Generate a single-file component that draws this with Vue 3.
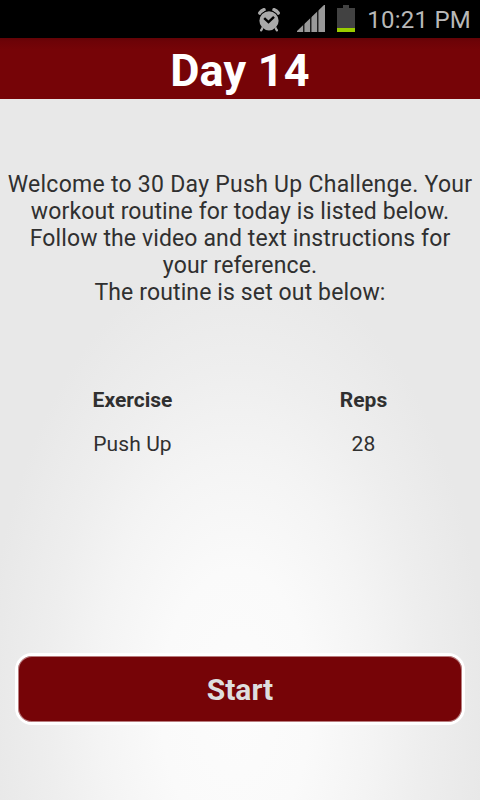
<script setup>
const day = 14

const intro = [
  'Welcome to 30 Day Push Up Challenge. Your',
  'workout routine for today is listed below.',
  'Follow the video and text instructions for',
  'your reference.',
  'The routine is set out below:'
]

const routine = [
  { exercise: 'Push Up', reps: 28 }
]
</script>

<template>
  <div class="screen">
    <div class="status-bar">
      <svg class="alarm" width="24" height="26" viewBox="0 0 24 26">
        <g fill="none" stroke="#a9a9a9" stroke-linecap="round">
          <path d="M2.8 6 Q4.5 3.6 7 2.8" stroke-width="3.6" />
          <path d="M21.2 6 Q19.5 3.6 17 2.8" stroke-width="3.6" />
          <path d="M5.5 21 L4 23.5 M18.5 21 L20 23.5" stroke-width="2" />
        </g>
        <circle cx="12" cy="13.8" r="10.5" fill="#000" />
        <path d="M5.5 20.5 L4 23.8 M18.5 20.5 L20 23.8" fill="none" stroke="#a9a9a9" stroke-width="2" />
        <circle cx="12" cy="13.8" r="9.6" fill="#a9a9a9" />
        <path d="M7.2 11.2 L11.5 15.2 L17 9.8" fill="none" stroke="#000" stroke-width="2.4" />
      </svg>
      <svg class="signal" width="28" height="27" viewBox="0 0 28 27">
        <path d="M0 26 L27 0 H28 V27 H0 Z" fill="#999" />
        <path d="M6.8 17 V27 M13.8 10 V27 M20.8 4 V27" stroke="#000" stroke-width="1.2" />
      </svg>
      <svg class="battery" width="18" height="27" viewBox="0 0 18 27">
        <path d="M0 3 H6 V0 H12 V3 H18 V27 H0 Z" fill="#424242" />
        <rect y="23" width="18" height="4" fill="#99cc00" />
      </svg>
      <span class="clock">10:21 PM</span>
    </div>

    <header class="title-bar">
      <h1>Day {{ day }}</h1>
    </header>

    <main class="content">
      <p class="intro">
        <span v-for="line in intro" :key="line">{{ line }}</span>
      </p>

      <div class="routine">
        <div class="row head">
          <span>Exercise</span>
          <span>Reps</span>
        </div>
        <div v-for="item in routine" :key="item.exercise" class="row">
          <span>{{ item.exercise }}</span>
          <span>{{ item.reps }}</span>
        </div>
      </div>

      <button class="start">Start</button>
    </main>
  </div>
</template>

<style>
body {
  margin: 0;
}
</style>

<style scoped>
.screen {
  display: flex;
  flex-direction: column;
  width: 480px;
  height: 800px;
  overflow: hidden;
  font-family: Roboto, "Liberation Sans", sans-serif;
  color: #303030;
  background: radial-gradient(ellipse 250px 450px at 236px 705px, #fcfcfc 0%, #fafafa 30%, #f4f4f4 55%, #eee 75%, #e8e8e8 100%);
}

.status-bar {
  display: flex;
  align-items: flex-start;
  justify-content: flex-end;
  box-sizing: border-box;
  height: 38px;
  padding: 5px 9px 0 0;
  background: #000;
}
.alarm { margin: 2px 16px 0 0; }
.signal { margin-right: 12px; }
.battery { margin-right: 12px; }
.clock {
  font-size: 24px;
  line-height: 30px;
  letter-spacing: 0.25px;
  color: #b8b8b8;
  white-space: nowrap;
}

.title-bar {
  height: 61px;
  background: linear-gradient(#620306 0, #6d0307 3px, #760407 12px);
}
.title-bar h1 {
  margin: 0;
  font-size: 45px;
  line-height: 66px;
  letter-spacing: 0.2px;
  font-weight: 700;
  text-align: center;
  color: #fff;
}

.content {
  display: flex;
  flex-direction: column;
  flex: 1;
}
.intro {
  display: flex;
  flex-direction: column;
  align-items: center;
  margin: 72px 0 0;
  font-size: 23px;
  line-height: 27px;
  letter-spacing: 0.12px;
  white-space: nowrap;
}
.intro span:first-child {
  letter-spacing: 0.27px;
}

.routine {
  margin-top: 72px;
  font-size: 21px;
}
.row {
  display: grid;
  grid-template-columns: 265px 197px;
  height: 44px;
  line-height: 44px;
  letter-spacing: 0.1px;
  text-align: center;
}
.row.head {
  font-weight: 700;
  letter-spacing: 0;
}

.start {
  box-sizing: border-box;
  width: 450px;
  height: 72px;
  margin: 187px 0 0 15px;
  padding: 2px 0 0;
  border: 3px solid #fff;
  border-radius: 17px;
  background: #760407;
  box-shadow: inset 0 0 0 1px #b87c7e;
  font-family: inherit;
  font-size: 30px;
  font-weight: 700;
  line-height: 64px;
  color: #dedede;
}
</style>
